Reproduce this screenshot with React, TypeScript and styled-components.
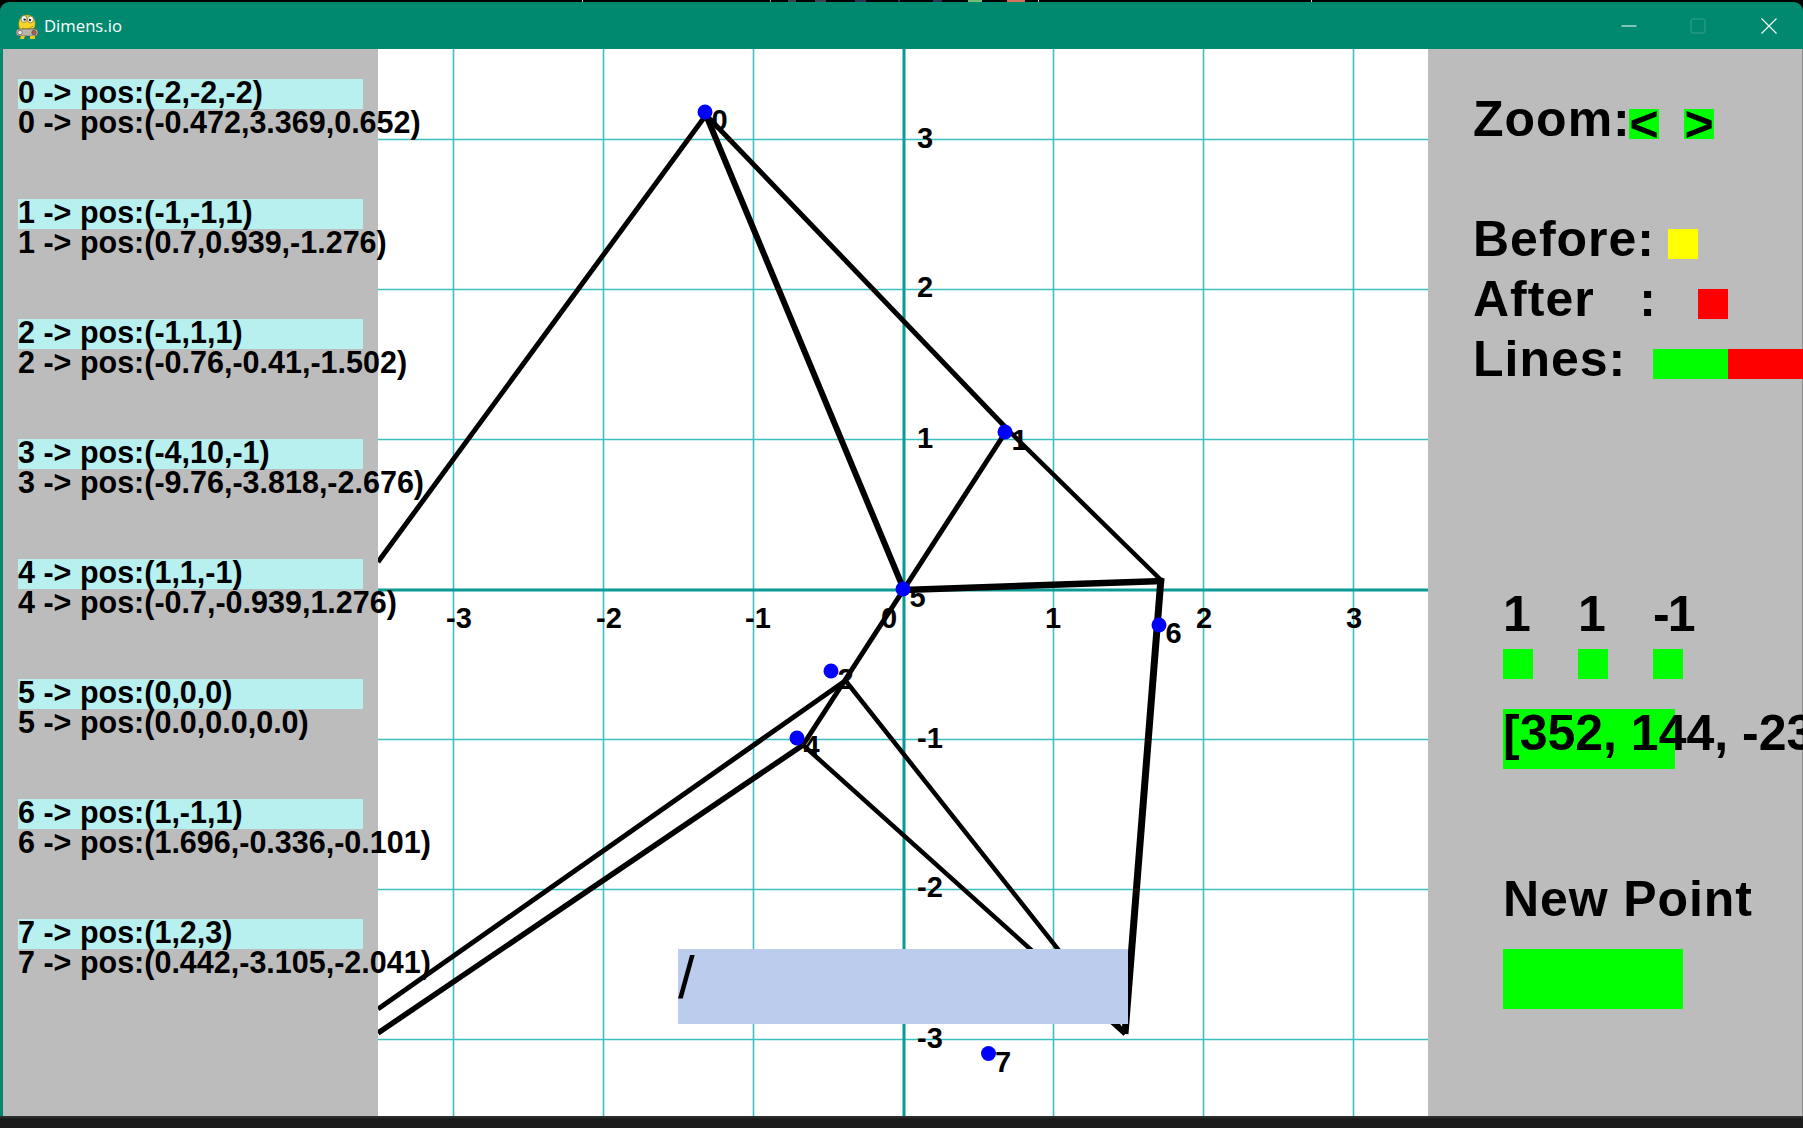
import React from 'react'
import styled, { createGlobalStyle } from 'styled-components'

const GlobalStyle = createGlobalStyle`
  html, body {
    margin: 0;
    padding: 0;
    background: #000;
    overflow: hidden;
  }
  * {
    box-sizing: border-box;
  }
`

const Screen = styled.div`
  width: 1803px;
  height: 1128px;
  display: flex;
  flex-direction: column;
  overflow: hidden;
  background: #000;
  font-family: "Liberation Sans", Arial, sans-serif;
  color: #000;
`

// slivers of the desktop that peek out above the window
const TopStrip = styled.div`
  height: 2px;
  flex: none;
  background: linear-gradient(
    to right,
    #000 582px, #ccc 582px, #ccc 583px,
    #000 583px, #000 770px, #999 770px, #999 771px,
    #000 771px, #000 788px, #3c4650 788px, #3c4650 796px,
    #000 796px, #000 815px, #3c4650 815px, #3c4650 826px,
    #000 826px, #000 855px, #26364f 855px, #26364f 866px,
    #000 866px, #000 898px, #26364f 898px, #26364f 900px,
    #000 900px, #000 933px, #26364f 933px, #26364f 942px,
    #000 942px, #000 968px, #6fbf73 968px, #6fbf73 982px,
    #000 982px, #000 1007px, #d9705c 1007px, #d9705c 1025px,
    #000 1025px, #000 1038px, #ccc 1038px, #ccc 1039px,
    #000 1039px, #000 1311px, #ccc 1311px, #ccc 1312px,
    #000 1312px
  );
`

const TitleBar = styled.div`
  height: 47px;
  flex: none;
  display: flex;
  align-items: center;
  padding-left: 15px;
  background: #00896f;
  border-radius: 9px 9px 0 0;
  color: #fff;
`

const AppLogo = styled.svg`
  width: 24px;
  height: 26px;
  flex: none;
  margin-top: 3px;
`

const AppTitle = styled.span`
  margin-left: 5px;
  font-family: "Open Sans", "Noto Sans", sans-serif;
  font-size: 16.7px;
`

const WindowControls = styled.div`
  margin-left: auto;
  display: flex;
  height: 100%;
`

const WindowButton = styled.div`
  width: 69px;
  display: flex;
  align-items: center;
  justify-content: center;
`

const CloseButton = styled(WindowButton)`
  margin-left: 2px;
`

const Workspace = styled.div`
  flex: 1;
  display: flex;
  min-height: 0;
  border-left: 3px solid #00896f;
`

const PointsPanel = styled.div`
  position: relative;
  z-index: 1;
  width: 375px;
  flex: none;
  padding: 30px 0 0 15px;
  background: #bcbcbc;
`

const PointEntry = styled.div`
  height: 120px;
`

const PointLine = styled.div<{ $source?: boolean }>`
  width: 345px;
  height: 30px;
  font-size: 30.5px;
  font-weight: 700;
  line-height: 27px;
  white-space: nowrap;
  background: ${(p) => (p.$source ? '#b8efef' : 'transparent')};
`

const Canvas = styled.div`
  position: relative;
  width: 1050px;
  flex: none;
  background: #fff;
`

const Plot = styled.svg`
  display: block;
  width: 1050px;
  height: 1067px;
`

const PlotLabel = styled.text`
  font-family: "Liberation Sans", Arial, sans-serif;
  font-size: 29px;
  font-weight: 700;
  fill: #000;
`

const PointInput = styled.div`
  position: absolute;
  left: 300px;
  top: 900px;
  width: 450px;
  height: 75px;
  background: #bccced;
  font-size: 60px;
  font-weight: 400;
  line-height: 58px;
`

const ControlPanel = styled.div`
  flex: 1;
  min-width: 0;
  padding: 40px 0 0 45px;
  background: #bcbcbc;
  border-right: 1px solid #8f8f8f;
`

const PanelRow = styled.div<{ $after?: number }>`
  display: flex;
  height: 60px;
  margin-bottom: ${(p) => p.$after ?? 0}px;
`

const BigText = styled.div`
  font-size: 50px;
  font-weight: 700;
  line-height: 60px;
  white-space: pre;
`

const RowLabel = styled(BigText)<{ $width: number }>`
  width: ${(p) => p.$width}px;
  flex: none;
  letter-spacing: 1px;
`

const ZoomButtons = styled.div`
  display: flex;
  gap: 25px;
  margin-top: 20px;
`

const ZoomButton = styled.div`
  width: 30px;
  height: 30px;
  background: #00ff00;
  font-size: 50px;
  font-weight: 700;
  line-height: 30px;
  text-align: center;
`

const ColorChip = styled.div<{ $color: string; $width?: number }>`
  width: ${(p) => p.$width ?? 30}px;
  height: 30px;
  flex: none;
  margin-top: 20px;
  background: ${(p) => p.$color};
`

const PointForm = styled.div`
  margin: 195px 0 0 30px;
`

const AxisColumns = styled.div`
  display: flex;
`

const AxisColumn = styled.div`
  width: 75px;
`

const AxisValue = styled(BigText)`
  letter-spacing: -2px;
`

const AxisButton = styled.div`
  width: 30px;
  height: 30px;
  margin-top: 5px;
  background: #00ff00;
`

const CoordField = styled.div`
  width: 172px;
  height: 60px;
  margin-top: 30px;
  background: #00ff00;
  font-size: 50px;
  font-weight: 700;
  line-height: 48px;
  white-space: nowrap;
`

const NewPointLabel = styled(BigText)`
  margin-top: 100px;
  letter-spacing: 0.9px;
`

const NewPointButton = styled.div`
  width: 180px;
  height: 60px;
  margin-top: 20px;
  background: #00ff00;
`

const BottomBar = styled.div`
  height: 12px;
  flex: none;
  background: #1c1c1c;
  border-top: 2px solid #2c2c2c;
`

const points = [
  { id: 0, source: '(-2,-2,-2)', result: '(-0.472,3.369,0.652)' },
  { id: 1, source: '(-1,-1,1)', result: '(0.7,0.939,-1.276)' },
  { id: 2, source: '(-1,1,1)', result: '(-0.76,-0.41,-1.502)' },
  { id: 3, source: '(-4,10,-1)', result: '(-9.76,-3.818,-2.676)' },
  { id: 4, source: '(1,1,-1)', result: '(-0.7,-0.939,1.276)' },
  { id: 5, source: '(0,0,0)', result: '(0.0,0.0,0.0)' },
  { id: 6, source: '(1,-1,1)', result: '(1.696,-0.336,-0.101)' },
  { id: 7, source: '(1,2,3)', result: '(0.442,-3.105,-2.041)' },
]

// plot coordinates are page coordinates, the viewBox starts at the canvas corner
const gridX = [453.5, 603.5, 753.5, 1053.5, 1203.5, 1353.5]
const gridY = [139.5, 289.5, 439.5, 739.5, 889.5, 1039.5]

const xLabels = [
  { text: '-3', x: 446 },
  { text: '-2', x: 596 },
  { text: '-1', x: 745 },
  { text: '0', x: 881 },
  { text: '1', x: 1045 },
  { text: '2', x: 1196 },
  { text: '3', x: 1346 },
]

const yLabels = [
  { text: '3', y: 148 },
  { text: '2', y: 297 },
  { text: '1', y: 448 },
  { text: '-1', y: 748 },
  { text: '-2', y: 897 },
  { text: '-3', y: 1048 },
]

const edges = [
  { x1: 706, y1: 115, x2: 378, y2: 562, w: 5 },
  { x1: 706, y1: 115, x2: 904, y2: 590, w: 6 },
  { x1: 706, y1: 115, x2: 1010, y2: 432, w: 5 },
  { x1: 1010, y1: 432, x2: 1163, y2: 582, w: 4.5 },
  { x1: 1005, y1: 433, x2: 803, y2: 745, w: 5 },
  { x1: 904, y1: 590, x2: 1163, y2: 581, w: 6.5 },
  { x1: 1161, y1: 578, x2: 1125, y2: 1034, w: 7 },
  { x1: 845, y1: 680, x2: 1125, y2: 1034, w: 4.5 },
  { x1: 803, y1: 745, x2: 1125, y2: 1034, w: 4.5 },
  { x1: 845, y1: 681, x2: 378, y2: 1009, w: 5 },
  { x1: 803, y1: 745, x2: 378, y2: 1033, w: 5.5 },
]

const dots = [
  { id: 0, x: 705, y: 112 },
  { id: 1, x: 1005, y: 432 },
  { id: 2, x: 831, y: 671 },
  { id: 4, x: 797, y: 738 },
  { id: 5, x: 903, y: 589 },
  { id: 6, x: 1159, y: 625 },
  { id: 7, x: 988.5, y: 1053.5 },
]

function PygameLogo() {
  return (
    <AppLogo viewBox="0 0 24 26">
      <path d="M4 12 C3 5 7 1 12 1 C17 1 21 5 20 11 C20 14 18 15 15 15 L8 16 C6 16 4 15 4 12Z" fill="#f5d327" stroke="#b89a10" strokeWidth="0.6" />
      <ellipse cx="9" cy="5" rx="3" ry="3.4" fill="#fff" stroke="#6b6420" strokeWidth="0.7" />
      <ellipse cx="15.5" cy="5.5" rx="3" ry="3.4" fill="#fff" stroke="#6b6420" strokeWidth="0.7" />
      <circle cx="9.6" cy="5.6" r="1.2" fill="#222" />
      <circle cx="15" cy="6" r="1.2" fill="#222" />
      <path d="M7 14 C10 16 15 15 18 12" fill="none" stroke="#8f7d12" strokeWidth="0.8" />
      <rect x="1" y="15" width="22" height="7" rx="3" fill="#b9b4a6" stroke="#5d5a52" strokeWidth="0.7" />
      <circle cx="5" cy="18.5" r="2.2" fill="#efefef" stroke="#444" strokeWidth="0.6" />
      <circle cx="19" cy="18.5" r="2.2" fill="#b5574e" stroke="#444" strokeWidth="0.6" />
      <path d="M6 22 L10 22 L9 25 L5 25Z M15 22 L20 22 L20 25 L15 25Z" fill="#f0c820" />
    </AppLogo>
  )
}

function MinimizeIcon() {
  return (
    <svg width="16" height="16" viewBox="0 0 16 16">
      <path d="M0.5 8 H15.5" stroke="#fff" strokeWidth="1" />
    </svg>
  )
}

function MaximizeIcon() {
  return (
    <svg width="16" height="16" viewBox="0 0 16 16">
      <rect x="1" y="1" width="14" height="14" rx="2" fill="none" stroke="#35a08c" strokeWidth="1" />
    </svg>
  )
}

function CloseIcon() {
  return (
    <svg width="16" height="16" viewBox="0 0 16 16">
      <path d="M0.5 0.5 L15.5 15.5 M15.5 0.5 L0.5 15.5" stroke="#fff" strokeWidth="1.1" />
    </svg>
  )
}

function PointsList() {
  return (
    <PointsPanel>
      {points.map((point) => (
        <PointEntry key={point.id}>
          <PointLine $source>{point.id} -&gt; pos:{point.source}</PointLine>
          <PointLine>{point.id} -&gt; pos:{point.result}</PointLine>
        </PointEntry>
      ))}
    </PointsPanel>
  )
}

function GraphCanvas() {
  return (
    <Canvas>
      <Plot viewBox="378 49 1050 1067">
        {gridX.map((x) => (
          <line key={x} x1={x} y1={49} x2={x} y2={1116} stroke="#3cbfbf" strokeWidth="1.6" />
        ))}
        {gridY.map((y) => (
          <line key={y} x1={378} y1={y} x2={1428} y2={y} stroke="#3cbfbf" strokeWidth="1.6" />
        ))}
        <line x1={904} y1={49} x2={904} y2={1116} stroke="#0a9a96" strokeWidth="3" />
        <line x1={378} y1={590} x2={1428} y2={590} stroke="#0a9a96" strokeWidth="3" />
        {xLabels.map((label) => (
          <PlotLabel key={label.text} x={label.x} y={628}>{label.text}</PlotLabel>
        ))}
        {yLabels.map((label) => (
          <PlotLabel key={label.text} x={917} y={label.y}>{label.text}</PlotLabel>
        ))}
        {dots.map((dot) => (
          <PlotLabel key={dot.id} x={dot.x + 6.5} y={dot.y + 18}>{dot.id}</PlotLabel>
        ))}
        {edges.map((edge, index) => (
          <line key={index} x1={edge.x1} y1={edge.y1} x2={edge.x2} y2={edge.y2} stroke="#000" strokeWidth={edge.w} />
        ))}
        {dots.map((dot) => (
          <circle key={dot.id} cx={dot.x} cy={dot.y} r="7.5" fill="#0000ff" />
        ))}
      </Plot>
      <PointInput>/</PointInput>
    </Canvas>
  )
}

function Controls() {
  return (
    <ControlPanel>
      <PanelRow $after={60}>
        <RowLabel $width={156}>Zoom:</RowLabel>
        <ZoomButtons>
          <ZoomButton>&lt;</ZoomButton>
          <ZoomButton>&gt;</ZoomButton>
        </ZoomButtons>
      </PanelRow>
      <PanelRow>
        <RowLabel $width={195}>Before:</RowLabel>
        <ColorChip $color="#ffff00" />
      </PanelRow>
      <PanelRow>
        <RowLabel $width={225}>{'After   :'}</RowLabel>
        <ColorChip $color="#ff0000" />
      </PanelRow>
      <PanelRow>
        <RowLabel $width={180}>Lines:</RowLabel>
        <ColorChip $color="#00ff00" $width={75} />
        <ColorChip $color="#ff0000" $width={75} />
      </PanelRow>
      <PointForm>
        <AxisColumns>
          {['1', '1', '-1'].map((value, index) => (
            <AxisColumn key={index}>
              <AxisValue>{value}</AxisValue>
              <AxisButton />
            </AxisColumn>
          ))}
        </AxisColumns>
        <CoordField>[352, 144, -236]</CoordField>
        <NewPointLabel>New Point</NewPointLabel>
        <NewPointButton />
      </PointForm>
    </ControlPanel>
  )
}

export default function App() {
  return (
    <Screen>
      <GlobalStyle />
      <TopStrip />
      <TitleBar>
        <PygameLogo />
        <AppTitle>Dimens.io</AppTitle>
        <WindowControls>
          <WindowButton><MinimizeIcon /></WindowButton>
          <WindowButton><MaximizeIcon /></WindowButton>
          <CloseButton><CloseIcon /></CloseButton>
        </WindowControls>
      </TitleBar>
      <Workspace>
        <PointsList />
        <GraphCanvas />
        <Controls />
      </Workspace>
      <BottomBar />
    </Screen>
  )
}
